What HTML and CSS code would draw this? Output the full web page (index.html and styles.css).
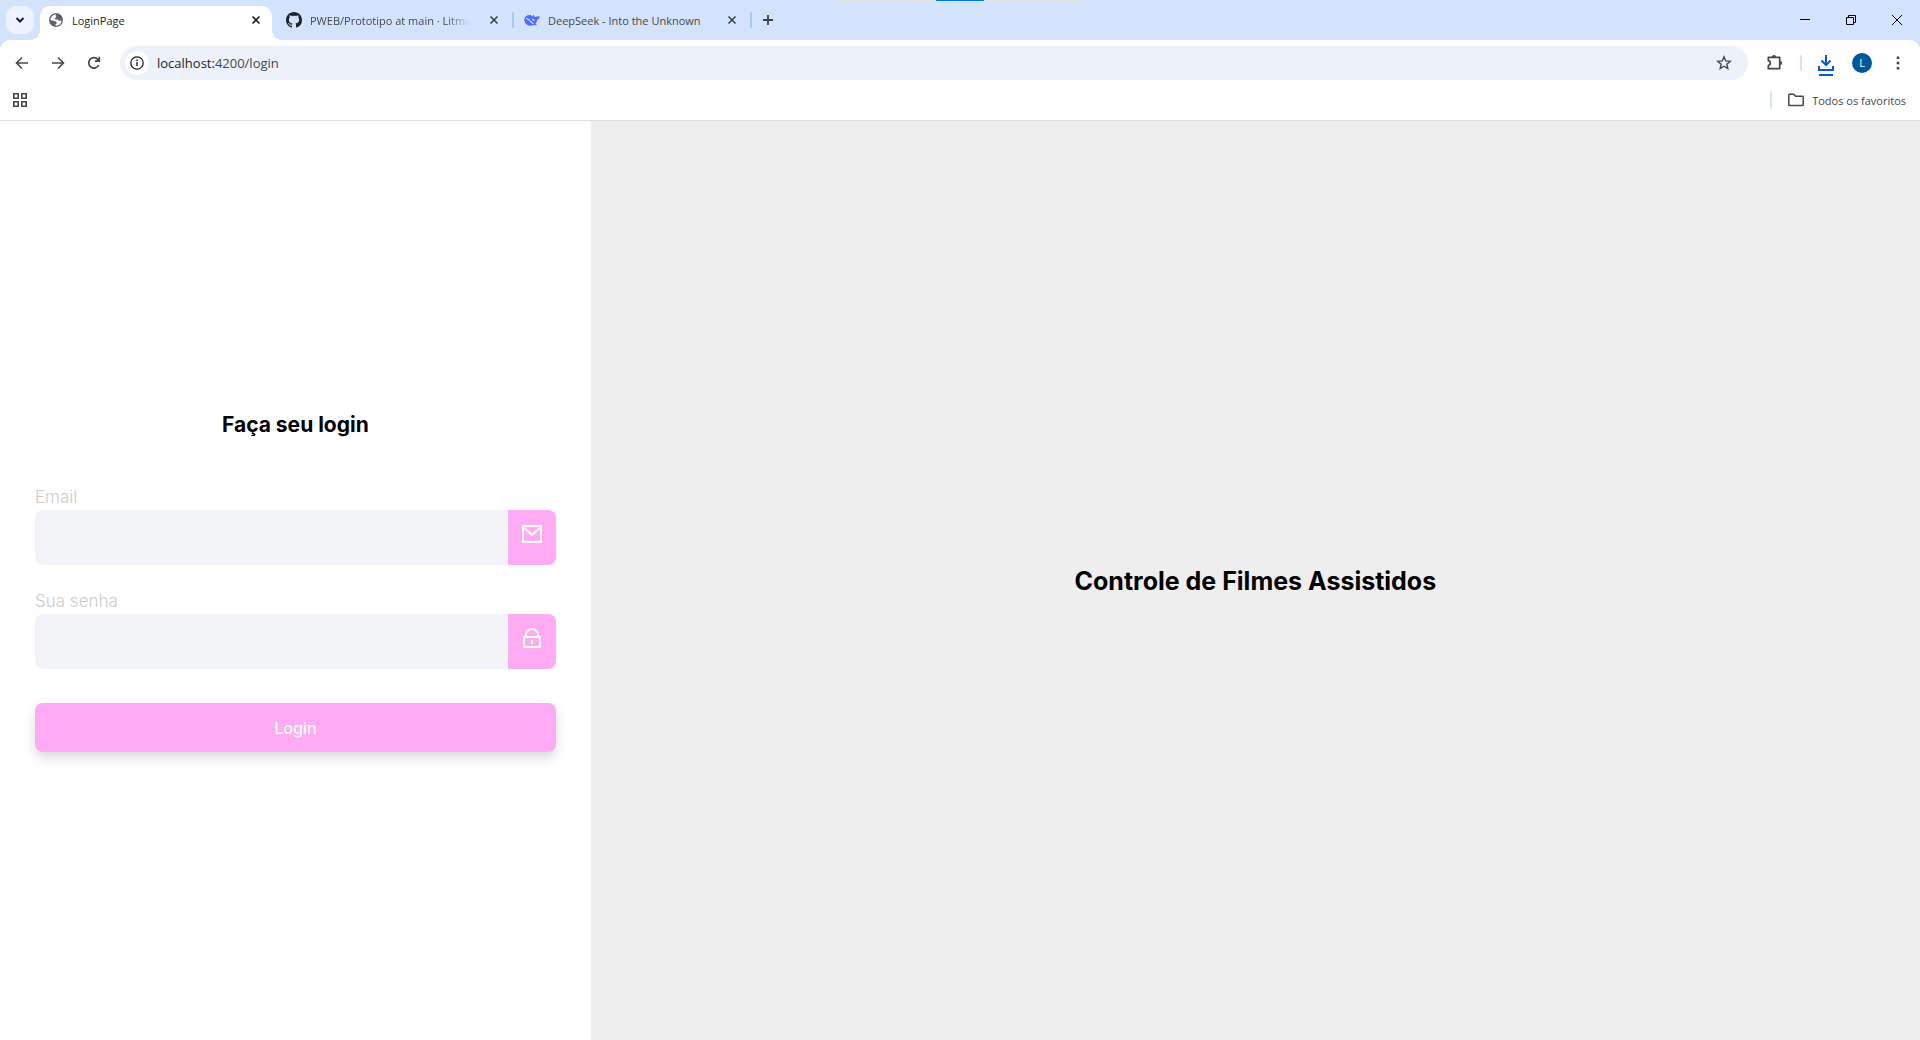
FILE: index.html
```html
<!DOCTYPE html>
<html lang="pt-BR">
<head>
<meta charset="utf-8">
<title>LoginPage</title>
<meta name="viewport" content="width=device-width, initial-scale=1">
<link rel="stylesheet" href="styles.css">
</head>
<body>
<header class="browser">
  <div class="share-handle"><span></span></div>
  <div class="tab-strip">
    <button class="tab-search" type="button" aria-label="Pesquisar guias">
      <svg width="16" height="16" viewBox="0 0 16 16"><path d="M4.500 6l3.500 3.500L11.500 6" fill="none" stroke="#1f1f1f" stroke-width="2"/></svg>
    </button>
    <div class="tab tab-active">
      <svg class="favicon" viewBox="0 0 16 16"><circle cx="8" cy="8" r="7" fill="#5f6368"/><path d="M8.500 2.300c-1 .8-1.200 1.700-.5 2.300.7.500.2 1.200-.8 1.400-.9.200-.7 1.400.2 1.400h1.800c1.200 0 1.300 1.300 2.300 1.300h2.200a5.700 5.700 0 0 1-6.200 5v-1.500c1.300-.3 1.600-1.300.7-2.300C7.300 8.800 5 8.300 2.400 8.200A5.700 5.700 0 0 1 8.500 2.300z" fill="#fff"/></svg>
      <span class="tab-title">LoginPage</span>
      <button class="tab-close" type="button" aria-label="Fechar"><svg width="16" height="16" viewBox="0 0 16 16"><path d="M4.500 4.500l7 7m0-7l-7 7" stroke="#1f1f1f" stroke-width="1.600"/></svg></button>
    </div>
    <div class="tab">
      <svg class="favicon" viewBox="0 0 16 16"><path fill="#1f2328" d="M8 0C3.580 0 0 3.580 0 8c0 3.540 2.290 6.530 5.470 7.590.4.070.55-.17.55-.38 0-.19-.01-.82-.01-1.490-2.010.37-2.530-.49-2.690-.94-.09-.23-.48-.94-.82-1.130-.28-.15-.68-.52-.01-.53.63-.01 1.080.58 1.230.82.72 1.210 1.870.87 2.330.66.070-.52.280-.87.510-1.070-1.780-.2-3.640-.89-3.640-3.950 0-.87.310-1.590.82-2.150-.08-.2-.36-1.020.08-2.120 0 0 .67-.21 2.200.82.640-.18 1.320-.27 2-.27s1.360.09 2 .27c1.530-1.040 2.200-.82 2.200-.82.440 1.100.160 1.920.080 2.120.510.560.820 1.270.820 2.150 0 3.070-1.870 3.750-3.650 3.950.290.250.540.730.540 1.480 0 1.070-.01 1.930-.01 2.200 0 .210.150.460.550.380A8.010 8.010 0 0 0 16 8c0-4.420-3.580-8-8-8z"/></svg>
      <span class="tab-title tab-title-long">PWEB/Prototipo at main · Litma</span>
      <button class="tab-close" type="button" aria-label="Fechar"><svg width="16" height="16" viewBox="0 0 16 16"><path d="M4.500 4.500l7 7m0-7l-7 7" stroke="#3c4043" stroke-width="1.600"/></svg></button>
    </div>
    <span class="divider"></span>
    <div class="tab">
      <svg class="favicon" viewBox="0 0 16 16"><path fill="#4d6bfe" d="M.2 7.500C.5 4.800 2.800 3 5.600 3c1.500 0 1.700.5 3 1.500.3-.7.200-1.500 1-2 .2 1.600.8 2.300 2 2.500 1.300-.8 2.500-.2 4.200-1-.1 2-1 3.300-2.500 3.500-.2 2-1 3.400-2 4.500.7.500 1.300.6 2 .8-1.500.9-2.600.5-3.600.2C5.500 15.200.3 12.500.2 7.500z"/><path d="M2 6.500c3.500-.5 4.700 4.800 7.500 5.200M8 7.500c1.100-.3 1.900.5 2.100 1.500" fill="none" stroke="#d3e3fd" stroke-width="1.200"/></svg>
      <span class="tab-title">DeepSeek - Into the Unknown</span>
      <button class="tab-close" type="button" aria-label="Fechar"><svg width="16" height="16" viewBox="0 0 16 16"><path d="M4.500 4.500l7 7m0-7l-7 7" stroke="#3c4043" stroke-width="1.600"/></svg></button>
    </div>
    <span class="divider"></span>
    <button class="new-tab" type="button" aria-label="Nova guia"><svg width="16" height="16" viewBox="0 0 16 16"><path d="M8 3v10M3 8h10" stroke="#3c4043" stroke-width="1.800"/></svg></button>
    <div class="window-controls">
      <button type="button" aria-label="Minimizar"><svg width="10" height="10" viewBox="0 0 10 10"><path d="M0 4.500h10" stroke="#000"/></svg></button>
      <button type="button" aria-label="Restaurar"><svg width="10" height="10" viewBox="0 0 10 10"><path d="M.5 2.500h7v7h-7zM2.500 2.500v-2h7v7h-2" fill="none" stroke="#000"/></svg></button>
      <button type="button" aria-label="Fechar janela"><svg width="10" height="10" viewBox="0 0 10 10"><path d="M0 0l10 10M10 0L0 10" stroke="#000"/></svg></button>
    </div>
  </div>

  <div class="chrome-body">
    <div class="toolbar">
      <button class="tool" type="button" aria-label="Voltar"><svg width="16" height="16" viewBox="0 0 16 16"><path d="M14 8H3M8 2.500L2.500 8 8 13.500" fill="none" stroke="#474747" stroke-width="1.600"/></svg></button>
      <button class="tool" type="button" aria-label="Avançar"><svg width="16" height="16" viewBox="0 0 16 16"><path d="M2 8h11M8 2.500L13.500 8 8 13.500" fill="none" stroke="#474747" stroke-width="1.600"/></svg></button>
      <button class="tool" type="button" aria-label="Recarregar"><svg width="16" height="16" viewBox="0 0 16 16"><path d="M12.700 10A5.200 5.200 0 1 1 12 4.600L13.300 6M13.300 1.800V6.200H8.900" fill="none" stroke="#474747" stroke-width="1.700"/></svg></button>
      <div class="omnibox">
        <button class="site-info" type="button" aria-label="Informações do site"><svg width="16" height="16" viewBox="0 0 16 16"><circle cx="8" cy="8" r="6.200" fill="none" stroke="#1f1f1f" stroke-width="1.300"/><path d="M8 7v4M8 4.600v1.500" stroke="#1f1f1f" stroke-width="1.400"/></svg></button>
        <a class="url" href="#">localhost:<span>4200/login</span></a>
        <button class="tool star" type="button" aria-label="Favoritar"><svg width="16" height="16" viewBox="0 0 16 16"><path d="M8 1.800l1.750 4.100 4.450.4-3.400 2.900 1.050 4.400L8 11.250 4.150 13.600 5.200 9.200 1.800 6.300l4.450-.4z" fill="none" stroke="#474747" stroke-width="1.400"/></svg></button>
      </div>
      <div class="tools">
        <button class="tool" type="button" aria-label="Extensões"><svg width="18" height="18" viewBox="0 0 18 18"><path d="M2.300 3.300h11.400v11.400H2.300v-3.200a2.500 2.500 0 0 0 0-4.900z" fill="none" stroke="#474747" stroke-width="1.700" stroke-linejoin="round"/><path d="M6 3a2 2 0 0 1 4 0zM14.200 7a2 2 0 0 1 0 4z" fill="#474747"/></svg></button>
        <span class="divider"></span>
        <button class="tool download" type="button" aria-label="Downloads"><svg width="16" height="22" viewBox="0 0 16 22"><path d="M8 1v10M3.500 6.500L8 11l4.500-4.500M1 12v4h14v-4M1 21h14" fill="none" stroke="#0b57d0" stroke-width="2"/></svg></button>
        <button class="tool" type="button" aria-label="Perfil"><span class="avatar">L</span></button>
        <button class="tool" type="button" aria-label="Menu"><svg width="16" height="16" viewBox="0 0 16 16"><path d="M6.700 1.500h2.600v2.600H6.700zM6.700 6.700h2.600v2.600H6.700zM6.700 11.900h2.600v2.600H6.700z" fill="#474747"/></svg></button>
      </div>
    </div>
    <div class="bookmarks">
      <button class="apps" type="button" aria-label="Apps"><svg width="14" height="14" viewBox="0 0 14 14"><path d="M.8.8h4.400v4.400H.8zM8.800.8h4.400v4.400H8.800zM.8 8.800h4.400v4.400H.8zM8.800 8.800h4.400v4.400H8.800z" fill="none" stroke="#474747" stroke-width="1.600"/></svg></button>
      <span class="divider"></span>
      <a class="all-bookmarks" href="#"><svg width="16" height="16" viewBox="0 0 16 16"><path d="M.8 3q0-.7.700-.7h4.300l1.800 1.900h6.900q.7 0 .7.700v8q0 .7-.7.700h-13q-.7 0-.7-.7z" fill="none" stroke="#474747" stroke-width="1.500"/></svg>Todos os favoritos</a>
    </div>
  </div>
</header>

<main class="page">
  <section class="login-panel">
    <form class="login-form">
      <h1 class="form-title">Faça seu login</h1>
      <div class="field">
        <label for="email">Email</label>
        <div class="input-row">
          <input id="email" type="email">
          <span class="input-icon"><svg width="20" height="18" viewBox="0 0 20 18"><path d="M1 1h18v16H1zM1 2l9 8 9-8" fill="none" stroke="#fff" stroke-width="2"/></svg></span>
        </div>
      </div>
      <div class="field">
        <label for="password">Sua senha</label>
        <div class="input-row">
          <input id="password" type="password">
          <span class="input-icon"><svg width="18" height="20" viewBox="0 0 18 20"><path d="M1 9h16v10H1zM3 9V7a6 6 0 0 1 12 0v2M9 12v4" fill="none" stroke="#fff" stroke-width="2"/></svg></span>
        </div>
      </div>
      <button class="submit" type="button">Login</button>
    </form>
  </section>
  <section class="hero">
    <h2>Controle de Filmes Assistidos</h2>
  </section>
</main>
</body>
</html>
```
FILE: styles.css
```css
* {
  box-sizing: border-box;
}

body {
  margin: 0;
  min-height: 100vh;
  display: flex;
  flex-direction: column;
  background: #fff;
  font-family: Inter, "Noto Sans", sans-serif;
}

button {
  border: 0;
  padding: 0;
  background: none;
  font: inherit;
  display: flex;
  align-items: center;
  justify-content: center;
}

a {
  color: inherit;
  text-decoration: none;
}

svg {
  display: block;
  flex: none;
}

/* Browser frame */
.browser {
  position: relative;
  background: #d3e3fd;
  color: #1f1f1f;
  font-family: "Open Sans", "Noto Sans", sans-serif;
  font-size: 11px;
}

.share-handle {
  position: absolute;
  top: 0;
  left: 50%;
  width: 240px;
  height: 1px;
  transform: translateX(-50%);
  display: flex;
  justify-content: center;
  background: #e3e3e3;
}

.share-handle span {
  width: 48px;
  background: #0078d7;
}

.tab-strip {
  display: flex;
  align-items: center;
  height: 40px;
  padding-left: 6px;
}

.tab-search {
  width: 28px;
  height: 28px;
  margin-right: 6px;
  border-radius: 10px;
  background: #ecf3fe;
}

.tab {
  display: flex;
  align-items: center;
  gap: 8px;
  width: 232px;
  height: 28px;
  padding: 0 8px;
  color: #474747;
}

.tab-active {
  position: relative;
  align-self: flex-end;
  height: 34px;
  margin-right: 6px;
  padding-bottom: 6px;
  border-radius: 10px 10px 0 0;
  background: #fff;
  color: #1f1f1f;
}

.tab-active::before,
.tab-active::after {
  content: "";
  position: absolute;
  bottom: 0;
  width: 10px;
  height: 10px;
}

.tab-active::before {
  right: 100%;
  background: radial-gradient(circle at 0 0, transparent 10px, #fff 10px);
}

.tab-active::after {
  left: 100%;
  background: radial-gradient(circle at 100% 0, transparent 10px, #fff 10px);
}

.favicon {
  width: 16px;
  height: 16px;
}

.tab-title {
  flex: 1;
  min-width: 0;
  padding-top: 2px;
  white-space: nowrap;
  line-height: 20px;
}

.tab-title-long {
  mask-image: linear-gradient(to left, transparent 8px, #000 32px);
}

.divider {
  flex: none;
  width: 2px;
  height: 16px;
  margin: 0 2px;
  border-radius: 1px;
  background: #a8c7fa;
}

.new-tab {
  width: 28px;
  height: 28px;
}

.window-controls {
  display: flex;
  margin-left: auto;
}

.window-controls button {
  width: 46px;
  height: 40px;
}

.chrome-body {
  border-radius: 10px 10px 0 0;
  border-bottom: 1px solid #dedede;
  background: #fff;
}

.toolbar {
  display: flex;
  align-items: center;
  padding: 6px 4px;
}

.tool {
  width: 36px;
  height: 34px;
}

.download {
  padding-top: 4px;
}

.omnibox {
  display: flex;
  align-items: center;
  flex: 1;
  height: 34px;
  margin: 0 9px 0 8px;
  padding: 0 6px 0 5px;
  border-radius: 17px;
  background: #ecf1fa;
}

.site-info {
  width: 24px;
  height: 24px;
  border-radius: 50%;
  background: #fff;
}

.url {
  flex: 1;
  margin-left: 8px;
  font-size: 13px;
}

.url span {
  color: #474747;
}

.tools {
  display: flex;
  align-items: center;
}

.toolbar .divider,
.bookmarks .divider {
  background: #d3e3fd;
}

.toolbar .divider {
  margin: 0 6px 0 7px;
}

.avatar {
  width: 20px;
  height: 20px;
  border-radius: 50%;
  background: #01579b;
  color: #fff;
  line-height: 20px;
}

.bookmarks {
  display: flex;
  align-items: center;
  height: 34px;
  padding: 0 14px 6px 13px;
}

.bookmarks .divider {
  margin: 0 16px 0 auto;
}

.all-bookmarks {
  display: flex;
  align-items: center;
  gap: 8px;
  color: #474747;
}

/* Login page */
.page {
  flex: 1;
  display: grid;
  grid-template-columns: 4fr 9fr;
}

.login-panel {
  display: flex;
  align-items: center;
  padding: 35px;
}

.login-form {
  width: 100%;
}

.form-title {
  margin: 0 0 44px;
  font-size: 21px;
  font-weight: 700;
  line-height: 32px;
  text-align: center;
}

.field {
  margin-bottom: 24px;
}

.field label {
  display: block;
  color: #ccc;
  font-size: 17px;
  font-weight: 300;
  line-height: 25px;
}

.input-row {
  display: flex;
  height: 55px;
  border-radius: 8px;
  overflow: hidden;
  background: #f1f3f7;
}

.input-row input {
  flex: 1;
  min-width: 0;
  padding: 0 16px;
  border: 0;
  background: transparent;
  font: inherit;
}

.input-icon {
  display: flex;
  align-items: center;
  justify-content: center;
  width: 48px;
  padding-bottom: 7px;
  background: #ffabf3;
}

.submit {
  width: 100%;
  height: 49px;
  margin-top: 34px;
  border-radius: 8px;
  background: #ffabf3;
  box-shadow: 0 6px 12px rgba(0, 0, 0, 0.14);
  color: #fff;
  font-size: 16px;
  font-weight: 500;
}

.hero {
  display: flex;
  align-items: center;
  justify-content: center;
  padding: 24px;
  background: #eee;
}

.hero h2 {
  margin: 0;
  font-size: 25px;
  font-weight: 700;
  line-height: 36px;
  text-align: center;
}
```
